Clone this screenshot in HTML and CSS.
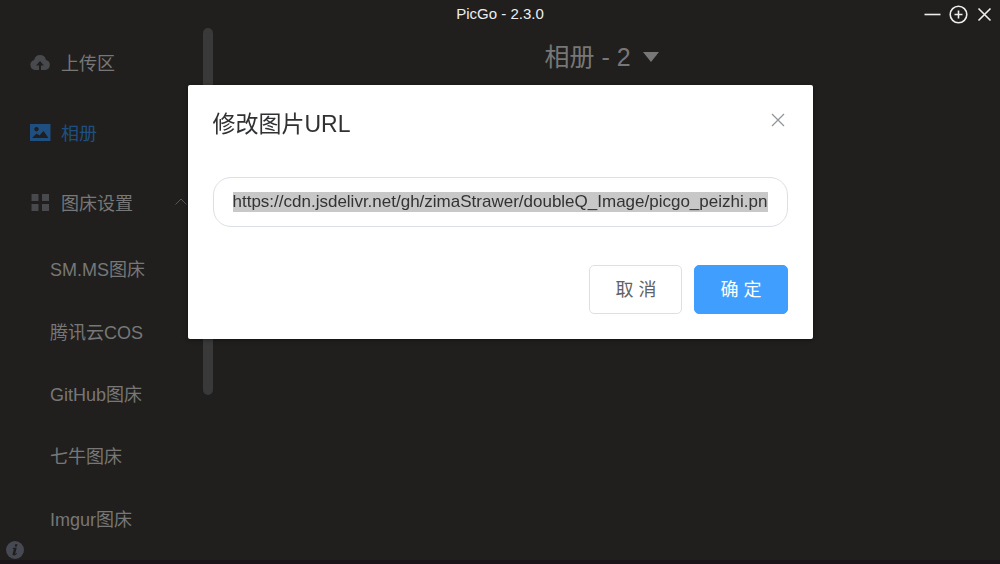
FILE: index.html
```html
<!DOCTYPE html>
<html lang="zh-CN">
<head>
<meta charset="utf-8">
<meta name="viewport" content="width=device-width, initial-scale=1">
<title>PicGo - 2.3.0</title>
<link rel="stylesheet" href="styles.css">
</head>
<body>
<header class="titlebar">
  <span class="titlebar-name">PicGo - 2.3.0</span>
  <div class="window-controls">
    <button class="window-btn" type="button" aria-label="最小化"><svg viewBox="0 0 20 20"><path d="M1.500 10.500H17.500"/></svg></button>
    <button class="window-btn" type="button" aria-label="小窗口"><svg viewBox="0 0 20 20"><circle cx="9.500" cy="10.500" r="8.300"/><path d="M5.500 10.500h8M9.500 6.500v8"/></svg></button>
    <button class="window-btn" type="button" aria-label="关闭"><svg viewBox="0 0 20 20"><path d="M3.500 4.500l12 12M15.500 4.500L3.500 16.500"/></svg></button>
  </div>
</header>
<div class="app">
  <aside class="sidebar">
    <nav class="menu">
      <a class="menu-item" href="#upload"><svg class="menu-icon" viewBox="0 0 20 20"><path fill-rule="evenodd" d="M5 18A5.100 5.100 0 0 1 4.200 8A6 6 0 0 1 16 8A5.100 5.100 0 0 1 15.300 18H11V13.500h3l-4-4.500L6 13.500h3v4.500z"/></svg><span>上传区</span></a>
      <a class="menu-item menu-item-active" href="#gallery"><svg class="menu-icon" viewBox="0 0 20 20"><path fill-rule="evenodd" d="M0 2H20.500V19H0zM2 16H18.500L13.500 9L9.500 13.500L6.500 11.500zM6.500 5a2.200 2.200 0 1 0 .010 0z"/></svg><span>相册</span></a>
      <a class="menu-item" href="#picbed"><svg class="menu-icon" viewBox="0 0 20 20"><path d="M1.500 2h7v7h-7zM12 2h7v7h-7zM1.500 12h7v7h-7zM12 12h7v7h-7z"/></svg><span>图床设置</span><svg class="menu-arrow" viewBox="0 0 12 12"><path d="M.5 8.500l5.500-5.500L11.500 8.500"/></svg></a>
      <div class="submenu">
        <a class="submenu-item" href="#smms">SM.MS图床</a>
        <a class="submenu-item" href="#tcyun">腾讯云COS</a>
        <a class="submenu-item" href="#github">GitHub图床</a>
        <a class="submenu-item" href="#qiniu">七牛图床</a>
        <a class="submenu-item" href="#imgur">Imgur图床</a>
      </div>
    </nav>
    <div class="scroll-thumb"></div>
    <button class="info" type="button" aria-label="关于"><svg viewBox="0 0 18 18"><circle class="info-disc" cx="9" cy="9" r="9"/><path d="M9.200 3.300h2.300l-.5 2.200H8.700zM6.800 6.900l3.900-.4-1.400 6 .3.400 1.300-.9.300.5c-1.300 1.400-2.600 2-3.500 2-1 0-1.300-.6-1-1.700l1.100-4.600-1.200-.5z"/></svg></button>
  </aside>
  <main class="content">
    <h1 class="gallery-title">相册 - 2 <svg class="caret" viewBox="0 0 16 10"><path d="M0 0h16L8 10z"/></svg></h1>
  </main>
</div>
<div class="overlay">
  <form class="dialog" role="dialog" aria-modal="true" aria-labelledby="dialog-title">
    <div class="dialog-header">
      <h2 class="dialog-title" id="dialog-title">修改图片URL</h2>
      <button class="dialog-close" type="button" aria-label="关闭对话框"><svg viewBox="0 0 14 14"><path d="M1 1l12 12M13 1L1 13"/></svg></button>
    </div>
    <input class="url-input" id="url" type="text" aria-labelledby="dialog-title" spellcheck="false" value="https://cdn.jsdelivr.net/gh/zimaStrawer/doubleQ_Image/picgo_peizhi.png">
    <div class="dialog-footer">
      <button class="btn" type="button">取 消</button>
      <button class="btn btn-primary" type="button">确 定</button>
    </div>
  </form>
</div>
<script src="app.js"></script>
</body>
</html>
```
FILE: styles.css
```css
* {
  box-sizing: border-box;
}

body {
  margin: 0;
  min-height: 100vh;
  display: flex;
  flex-direction: column;
  background: #201f1d;
  border-bottom: 4px solid #1a1518;
  color: #777777;
  font-family: "Liberation Sans", "Noto Sans CJK SC", sans-serif;
  font-size: 18px;
}

button {
  font: inherit;
  cursor: pointer;
}

svg {
  display: block;
}

.titlebar {
  display: grid;
  grid-template-columns: 1fr auto 1fr;
  align-items: center;
  height: 28px;
  color: #eeeeee;
  font-size: 15px;
}

.titlebar-name {
  grid-column: 2;
  padding-bottom: 1px;
}

.window-controls {
  display: flex;
  justify-content: flex-end;
  gap: 6px;
  padding-right: 5px;
}

.window-btn {
  width: 20px;
  height: 20px;
  padding: 0;
  border: 0;
  background: none;
}

.window-btn svg {
  fill: none;
  stroke: #eeeeee;
  stroke-width: 1.6;
}

.app {
  flex: 1;
  display: flex;
}

.sidebar {
  position: relative;
  display: flex;
  width: 213px;
}

.menu {
  flex: 1;
  display: flex;
  flex-direction: column;
  padding-bottom: 10px;
}

.menu-item {
  display: flex;
  align-items: center;
  height: 70px;
  padding: 0 16px 2px 30px;
  gap: 11px;
  color: inherit;
  text-decoration: none;
}

.menu-item-active {
  color: #1f4f80;
}

.menu-icon {
  width: 20px;
  height: 20px;
  fill: #48494d;
  overflow: visible;
}

.menu-item-active .menu-icon {
  fill: #1f4f80;
}

.menu-arrow {
  width: 12px;
  height: 12px;
  margin-left: auto;
  fill: none;
  stroke: #55565a;
}

.submenu {
  flex: 1;
  display: flex;
  flex-direction: column;
}

.submenu-item {
  flex: 1;
  display: flex;
  align-items: center;
  padding: 0 0 2px 50px;
  color: inherit;
  text-decoration: none;
}

.scroll-thumb {
  width: 10px;
  height: 69%;
  border-radius: 5px;
  background: #393939;
}

.info {
  position: absolute;
  left: 6px;
  bottom: 1px;
  width: 18px;
  height: 18px;
  padding: 0;
  border: 0;
  background: none;
}

.info path {
  fill: #201f1d;
}

.info-disc {
  fill: #464951;
}

.content {
  flex: 1;
  padding: 11px 20px 11px 10px;
}

.gallery-title {
  display: flex;
  align-items: center;
  justify-content: center;
  gap: 12px;
  margin: 0;
  font-size: 25px;
  font-weight: 400;
  line-height: 36px;
}

.caret {
  width: 16px;
  height: 10px;
  fill: #777777;
}

.overlay {
  position: fixed;
  inset: 28px 0 0;
  display: flex;
  align-items: flex-start;
  justify-content: center;
  padding-top: 57px;
}

.dialog {
  width: 62.5%;
  padding: 25px;
  border-radius: 2px;
  background: #ffffff;
  box-shadow: 0 1px 4px rgba(0, 0, 0, 0.4);
}

.dialog-header {
  display: flex;
  align-items: flex-start;
  justify-content: space-between;
  margin-bottom: 39px;
}

.dialog-title {
  margin: 0;
  color: #303133;
  font-size: 23px;
  font-weight: 400;
  line-height: 28px;
}

.dialog-close {
  width: 20px;
  height: 20px;
  padding: 3px;
  border: 0;
  background: none;
}

.dialog-close svg {
  fill: none;
  stroke: #909399;
  stroke-width: 1.2;
}

.url-input {
  display: block;
  width: 100%;
  height: 50px;
  padding: 0 19px;
  border: 1px solid #dcdfe6;
  border-radius: 18px;
  outline: 0;
  color: #333333;
  font: inherit;
  font-size: 17px;
}

.url-input::selection {
  background: #c8c8c8;
  color: #333333;
}

.dialog-footer {
  display: flex;
  justify-content: flex-end;
  gap: 12px;
  margin-top: 38px;
}

.btn {
  height: 49px;
  padding: 0 25px 3px;
  border: 1px solid #dcdfe6;
  border-radius: 5px;
  background: #ffffff;
  color: #606266;
}

.btn-primary {
  border-color: #409eff;
  background: #409eff;
  color: #ffffff;
}
```
FILE: app.js
```js
const urlInput = document.getElementById("url");
urlInput.focus();
urlInput.select();
urlInput.scrollLeft = 0;
```
